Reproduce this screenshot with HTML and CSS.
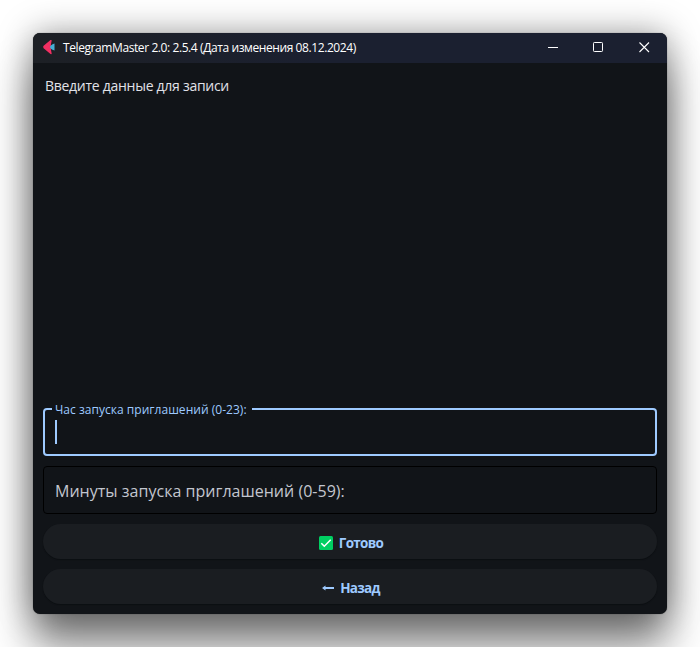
FILE: index.html
```html
<!DOCTYPE html>
<html lang="ru">
<head>
<meta charset="utf-8">
<title>TelegramMaster 2.0</title>
<link rel="stylesheet" href="styles.css">
</head>
<body>
<main class="window">
  <header class="titlebar">
    <svg class="logo" width="12" height="16" viewBox="0 0 12 16"><path d="M7.500 1Q9 .5 8.600 2Q7 8 8.600 14Q9 15.500 7.500 15L.6 9.200Q-.2 8 .6 6.800Z" fill="#f12f62"/><path d="M11.500 4.500V11.500Q7 10 7 8Q7 6 11.500 4.500Z" fill="#45afd6"/></svg>
    <span class="title">TelegramMaster 2.0: 2.5.4 (Дата изменения 08.12.2024)</span>
    <div class="controls">
      <svg width="46" height="30" viewBox="0 0 46 30"><path d="M19 14.500H29" stroke="#fff"/></svg>
      <svg width="46" height="30" viewBox="0 0 46 30"><rect x="18.500" y="9.500" width="9" height="9" rx=".8" fill="none" stroke="#fff"/></svg>
      <svg width="46" height="30" viewBox="0 0 46 30"><path d="M18.500 9.500L28 19M28 9.500L18.500 19" stroke="#fff" stroke-width="1.100"/></svg>
    </div>
  </header>
  <section class="content">
    <p class="heading">Введите данные для записи</p>
    <div class="form">
      <fieldset class="field focused">
        <legend>Час запуска приглашений (0-23):</legend>
        <div class="caret"></div>
      </fieldset>
      <div class="field empty"><span class="placeholder">Минуты запуска приглашений (0-59):</span></div>
      <button class="action"><svg width="14" height="14" viewBox="0 0 14 14"><rect width="14" height="14" rx="1.500" fill="#00cf62"/><path d="M2.300 7.200L5.300 10.300L11.700 3.800" fill="none" stroke="#fff" stroke-width="1.500"/></svg><span>Готово</span></button>
      <button class="action"><svg width="12" height="14" viewBox="0 0 12 14"><path d="M0 7L3.500 4.500V6H12V8H3.500V9.500Z" fill="#9ecaff"/></svg><span>Назад</span></button>
    </div>
  </section>
</main>
</body>
</html>
```
FILE: styles.css
```css
* { box-sizing: border-box; }
body {
  margin: 0;
  height: 647px;
  padding: 33px;
  overflow: hidden;
  background: #fff;
  font-family: "Open Sans", "Noto Sans", sans-serif;
}
.window {
  display: flex;
  flex-direction: column;
  height: 581px;
  border-radius: 7px;
  background: #111418;
  box-shadow: 0 0 1px rgba(0, 0, 0, .6), 0 0 34px rgba(0, 0, 0, .38), 0 33px 42px rgba(0, 0, 0, .47);
  overflow: hidden;
}
.titlebar {
  display: flex;
  align-items: center;
  height: 30px;
  padding-left: 10px;
  background: linear-gradient(90deg, #1d2025, #1b2030 45%);
}
.logo { margin-top: -2px; }
.title {
  margin: -1px 0 0 8px;
  font-size: 12px;
  letter-spacing: -.41px;
  color: #fff;
  white-space: nowrap;
}
.controls { display: flex; margin-left: auto; }
.content {
  display: flex;
  flex: 1;
  flex-direction: column;
  justify-content: space-between;
  padding: 13px 10px 10px;
}
.heading {
  margin: 0 2px;
  font-size: 14px;
  line-height: 20px;
  letter-spacing: -.28px;
  color: #e1e2e8;
}
.form { display: flex; flex-direction: column; gap: 10px; }
.field {
  height: 48px;
  margin: 0;
  border-radius: 4px;
}
.focused { padding: 10px; border: 2px solid #9ecaff; }
.focused legend {
  height: 2px;
  margin-left: -3px;
  padding: 0 5px 0 3px;
  font-size: 12px;
  line-height: 4px;
  letter-spacing: .03px;
  color: #9ecaff;
  white-space: nowrap;
}
.caret { width: 2px; height: 24px; background: #9ecaff; }
.empty {
  display: flex;
  align-items: center;
  padding: 2px 11px 0;
  border: 1px solid #000;
}
.placeholder { font-size: 16px; letter-spacing: .02px; color: #c3c6cf; }
.action {
  display: flex;
  align-items: center;
  justify-content: center;
  gap: 6px;
  height: 35px;
  padding: 3px 0 0 2px;
  border: 0;
  border-radius: 18px;
  background: #1a1d21;
  box-shadow: 0 1px 1px #0c0f12;
  font-family: inherit;
  font-size: 13.500px;
  font-weight: 700;
  letter-spacing: -.7px;
  color: #9ecaff;
}
```
